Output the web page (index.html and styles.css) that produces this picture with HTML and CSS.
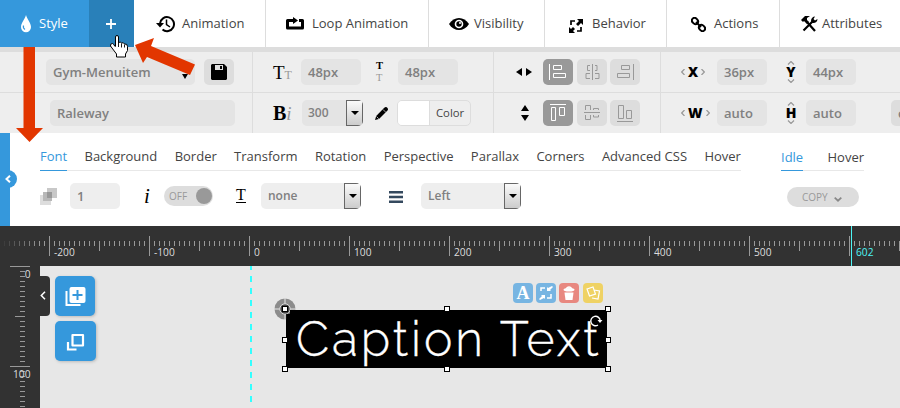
FILE: index.html
```html
<!DOCTYPE html>
<html lang="en">
<head>
<meta charset="utf-8">
<title>Layer style editor</title>
<link rel="stylesheet" href="styles.css">
</head>
<body>
<nav class="tabs">
  <a class="tab tab-style"><svg width="12" height="18" viewBox="0 0 12 18"><path fill="#fff" d="M6 0C5 4 1 8 1 12a5 5.300 0 0 0 10 0C11 8 7 4 6 0z"/><path d="M3.500 10.500c-.5 2 .3 3.300 1.500 4" fill="none" stroke="#3598dc" stroke-width="1.200"/></svg><span>Style</span></a>
  <a class="tab tab-plus"><svg width="10" height="10" viewBox="0 0 10 10"><path d="M5 0v10M0 5h10" stroke="#fff" stroke-width="1.800"/></svg></a>
  <a class="tab tab-animation"><svg width="19" height="18" viewBox="0 0 19 18"><path d="M4 8.500a7 7 0 1 1 2.500 6" fill="none" stroke="#000" stroke-width="2"/><path d="M0 8h8l-4 4.500z"/><path d="M10.500 4.500v5l3.500 2.500" fill="none" stroke="#000" stroke-width="1.500"/></svg><span>Animation</span></a>
  <a class="tab tab-loop"><svg width="18" height="13" viewBox="0 0 18 13"><path d="M7 3.500H1.500v7.500h15V3.500H13" fill="none" stroke="#000" stroke-width="3" stroke-linejoin="round"/><path d="M7 0l5 3.500L7 7z"/></svg><span>Loop Animation</span></a>
  <a class="tab tab-visibility"><svg width="20" height="12" viewBox="0 0 20 12"><path d="M0 6C5-2 15-2 20 6 15 14 5 14 0 6z"/><circle cx="10" cy="6" r="4.300" fill="#fff"/><circle cx="10" cy="6" r="2.700"/><circle cx="11" cy="5" r="1" fill="#fff"/></svg><span>Visibility</span></a>
  <a class="tab tab-behavior"><svg width="14" height="14" viewBox="0 0 14 14"><path d="M8 0h6v6l-2-2-3 3-2-2 3-3zM6 14H0V8l2 2 2-2 2 2-2 2z"/><path d="M2 6V2h4M12 8v4H8" fill="none" stroke="#000" stroke-width="1.700"/></svg><span>Behavior</span></a>
  <a class="tab tab-actions"><svg width="15" height="15" viewBox="0 0 15 15"><g fill="none" stroke="#000" stroke-width="2"><ellipse cx="4" cy="4" rx="3.300" ry="2.700" transform="rotate(45 4 4)"/><ellipse cx="11" cy="11" rx="3.300" ry="2.700" transform="rotate(45 11 11)"/><path d="M5 5l5 5"/></g></svg><span>Actions</span></a>
  <a class="tab tab-attributes"><svg width="17" height="16" viewBox="0 0 17 16"><path d="M0 4l4-4h5L6 2v2l2 2-2 2-3-3-1 1z"/><path d="M6 6l8 9M2.500 14.500L12 5" stroke="#000" stroke-width="2.200"/><path d="M10 5c0-3 2-4.500 4-4.500L12.500 3 14 4.500 16.500 3C16.500 6 14 7.500 11.500 7z"/></svg><span>Attributes</span></a>
</nav>

<section class="settings">
  <div class="row">
    <div class="group g-name"><div class="field preset">Gym-Menuitem<i class="caret"></i></div><button class="tile save"><svg width="16" height="16" viewBox="0 0 16 16"><path d="M1 0h12l3 3v12l-1 1H1l-1-1V1z"/><path d="M4 1h8v5H4z" fill="#ddd"/><path d="M9 2h2v3H9z"/></svg></button></div>
    <div class="group g-type"><span class="icon-tt">T<small>T</small></span><div class="field size">48px</div><span class="icon-lh"><b>T</b><span>T</span></span><div class="field height">48px</div></div>
    <div class="group g-align">
      <svg class="dir" width="16" height="8" viewBox="0 0 16 8"><path d="M0 4l6-4v8zM16 4l-6-4v8z"/></svg>
      <div class="tile on"><svg width="18" height="18" viewBox="0 0 18 18"><path d="M.5 1v16M4.500 2.500h8v4h-8zM4.500 10.500h12v4h-12z"/></svg></div>
      <div class="tile"><svg width="18" height="18" viewBox="0 0 18 18"><path d="M9.500 1v16M7 2.500H4.500v5H7M12 2.500h2v5h-2M7 10.500H3v5h4M12 10.500h4v5h-4"/></svg></div>
      <div class="tile"><svg width="18" height="18" viewBox="0 0 18 18"><path d="M17.500 1v16M5.500 2.500h8v4h-8zM1.500 10.500h12v4h-12z"/></svg></div>
    </div>
    <div class="group g-pos"><span class="axis"><svg width="4" height="6" viewBox="0 0 4 6"><path d="M3.500 0L.7 3l2.800 3"/></svg><b>X</b><svg width="4" height="6" viewBox="0 0 4 6"><path d="M.5 0l2.800 3L.5 6"/></svg></span><div class="field pos">36px</div><span class="axis vertical"><svg width="8" height="4" viewBox="0 0 8 4"><path d="M1 3.500l3-3 3 3"/></svg><b>Y</b><svg width="8" height="4" viewBox="0 0 8 4"><path d="M1 .5l3 3 3-3"/></svg></span><div class="field pos second">44px</div></div>
  </div>
  <div class="row lower">
    <div class="group g-name"><div class="field font">Raleway</div></div>
    <div class="group g-type"><span class="icon-bi"><b>B</b><i>i</i></span><div class="select weight"><span>300</span><i class="drop"></i></div><svg class="pencil" width="13" height="13" viewBox="0 0 13 13"><path d="M0 13l1.200-4L9 1q2-2 3.500 0 1 1.500-.5 3L4 12z"/><path d="M1.500 9.500l2.300 2.300M8 2.500L11 5.500" stroke="#eee" stroke-width=".7"/></svg><div class="color"><i></i><span>Color</span></div></div>
    <div class="group g-align">
      <svg class="dir updown" width="8" height="16" viewBox="0 0 8 16"><path d="M4 0l4 6H0zM4 16l4-6H0z"/></svg>
      <div class="tile on"><svg width="18" height="18" viewBox="0 0 18 18"><path d="M1 .5h16M2.500 3.500h4v13h-4zM10.500 3.500h5v8h-5z"/></svg></div>
      <div class="tile"><svg width="18" height="18" viewBox="0 0 18 18"><path d="M1 8.500h16M2.500 6V1.500h5V6M2.500 11v4.500h5V11M10.500 6V4.500h5V6M10.500 11v2h5v-2"/></svg></div>
      <div class="tile"><svg width="18" height="18" viewBox="0 0 18 18"><path d="M1 17.500h16M2.500 1.500h5v13h-5zM10.500 6.500h5v8h-5z"/></svg></div>
    </div>
    <div class="group g-pos"><span class="axis"><svg width="4" height="6" viewBox="0 0 4 6"><path d="M3.500 0L.7 3l2.800 3"/></svg><b>W</b><svg width="4" height="6" viewBox="0 0 4 6"><path d="M.5 0l2.800 3L.5 6"/></svg></span><div class="field pos">auto</div><span class="axis vertical"><svg width="8" height="4" viewBox="0 0 8 4"><path d="M1 3.500l3-3 3 3"/></svg><b>H</b><svg width="8" height="4" viewBox="0 0 8 4"><path d="M1 .5l3 3 3-3"/></svg></span><div class="field pos second">auto</div><div class="field cover">c</div></div>
  </div>
</section>

<section class="panel">
  <div class="panel-edge"><span class="collapse"><svg width="6" height="8" viewBox="0 0 6 8"><path d="M5 .8L1.500 4 5 7.200" fill="none" stroke="#fff" stroke-width="2"/></svg></span></div>
  <div class="panel-main">
    <div class="subnav">
      <div class="links"><a class="current">Font</a><a>Background</a><a>Border</a><a>Transform</a><a>Rotation</a><a>Perspective</a><a>Parallax</a><a>Corners</a><a>Advanced CSS</a><a>Hover</a></div>
      <div class="links states"><a class="current">Idle</a><a>Hover</a></div>
    </div>
    <div class="controls">
      <svg class="opacity" width="17" height="17" viewBox="0 0 17 17"><path fill="#ddd" d="M0 7h11v10H0z"/><path fill="#c8c8c8" d="M7 0h10v10H7z"/><path fill="#b8b8b8" d="M3 4h9v9H3z"/><path fill="#999" d="M7 4h5v6H7z"/></svg>
      <div class="field opacity-value">1</div>
      <i class="italic">i</i>
      <div class="toggle"><span>OFF</span><i></i></div>
      <span class="underline-icon">T</span>
      <div class="select decoration"><span>none</span><i class="drop"></i></div>
      <svg class="bars" width="14" height="12" viewBox="0 0 14 12"><path d="M0 1.200h14M0 6h14M0 10.800h14" stroke="#34495e" stroke-width="2.400"/></svg>
      <div class="select align"><span>Left</span><i class="drop"></i></div>
      <div class="copy">COPY<svg width="8" height="5" viewBox="0 0 8 5"><path d="M.7.7L4 3.700 7.300.7" fill="none" stroke="#888" stroke-width="1.800"/></svg></div>
    </div>
  </div>
</section>

<section class="workspace">
  <div class="ruler-x">
    <svg width="900" height="40" viewBox="0 0 900 40">
      <defs>
        <pattern id="tx" x="49" width="100" height="40" patternUnits="userSpaceOnUse"><path d="M.5 10v20M50.500 15v10" stroke="#999"/></pattern>
        <pattern id="ts" x="49" width="5" height="40" patternUnits="userSpaceOnUse"><path d="M.5 15v5" stroke="#999"/></pattern>
        <linearGradient id="fade"><stop stop-color="#323232"/><stop offset="1" stop-color="#323232" stop-opacity="0"/></linearGradient>
      </defs>
      <path fill="url(#ts)" d="M0 0h900v40H0z"/><path fill="url(#tx)" d="M40 0h860v40H40z"/><path fill="url(#fade)" d="M0 0h40v40H0z"/>
      <path d="M851.500 0v40" stroke="#4df5f5"/>
      <g class="numbers"><text x="54" y="30">-200</text><text x="154" y="30">-100</text><text x="254" y="30">0</text><text x="354" y="30">100</text><text x="454" y="30">200</text><text x="554" y="30">300</text><text x="654" y="30">400</text><text x="754" y="30">500</text><text class="marker" x="856" y="30">602</text></g>
    </svg>
  </div>
  <div class="stage">
    <div class="ruler-y">
      <svg width="40" height="142" viewBox="0 0 40 142">
        <defs><pattern id="ty" width="40" height="100" patternUnits="userSpaceOnUse"><path d="M10 .5h20M15 50.500h10" stroke="#999"/></pattern><pattern id="tm" width="40" height="5" patternUnits="userSpaceOnUse"><path d="M20 .5h5" stroke="#999"/></pattern></defs>
        <path fill="url(#tm)" d="M0 0h40v142H0z"/><path fill="url(#ty)" d="M0 0h40v142H0z"/>
        <g class="numbers" text-anchor="end"><text x="30.500" y="12">0</text><text x="30.500" y="112">100</text></g>
      </svg>
    </div>
    <div class="drawer"><svg width="6" height="9" viewBox="0 0 6 9"><path d="M5 .7L1.300 4.500 5 8.300" fill="none" stroke="#fff" stroke-width="1.500"/></svg></div>
    <div class="tools">
      <button><svg width="21" height="21" viewBox="0 0 21 21"><path d="M1.500 5v14h14" fill="none" stroke="#fff" stroke-width="2"/><rect x="4.500" y="1" width="16" height="16" rx="2" fill="#fff"/><path d="M12.500 4v10M7.500 9h10" stroke="#3598dc" stroke-width="2"/></svg></button>
      <button class="wide"><svg width="19" height="19" viewBox="0 0 19 19"><path d="M6.500 3H17v10.500H6.500z" fill="none" stroke="#fff" stroke-width="2.200" stroke-linejoin="round"/><path d="M2 10v7.500h8.500" fill="none" stroke="#fff" stroke-width="2.200"/></svg></button>
    </div>
    <div class="canvas">
      <i class="guide"></i>
      <div class="layer"><span>Caption Text</span>
        <i class="anchor"><svg width="22" height="22" viewBox="0 0 22 22"><circle cx="11" cy="11" r="10.500" fill="#8c8c8c"/><path d="M11 0v22M0 11h22" stroke="#e7e7e7"/><circle cx="11" cy="11" r="5.200" fill="#444" stroke="#ddd"/></svg></i>
        <i class="handle nw"></i><i class="handle n"></i><i class="handle ne"></i><i class="handle w"></i><i class="handle e"></i><i class="handle sw"></i><i class="handle s"></i><i class="handle se"></i>
        <svg class="rotate" width="14" height="12" viewBox="0 0 14 12"><circle cx="7" cy="6" r="6" fill="#000"/><path d="M9 10A4.700 4.700 0 1 1 11.200 6" fill="none" stroke="#fff" stroke-width="1.400"/><path d="M8.500 5h5l-2.500 3z" fill="#fff"/></svg>
        <div class="actions">
          <b class="letter">A</b>
          <b><svg width="14" height="14" viewBox="0 0 14 14"><path fill="#fff" d="M13 0l1 1-3 3 1 1H8V1l1 1zM1 14l-1-1 3-3-1-1h4v4l-1-1z"/><path d="M2 5V2h4M12 8v4H8" fill="none" stroke="#fff" stroke-width="1.500"/></svg></b>
          <b class="red"><svg width="12" height="14" viewBox="0 0 12 14"><path d="M3 3q3-4 6 0" fill="none" stroke="#fff" stroke-width="1.500"/><ellipse cx="6" cy="3.700" rx="5.500" ry="1.800" fill="#fff"/><path d="M1.500 6.500h9L9.500 14h-7z" fill="#fff"/></svg></b>
          <b class="yellow"><svg width="15" height="15" viewBox="0 0 15 15"><path d="M8 4l5.500 1-1.500 8-6-1M1 3l6-2 2.500 7-6 2z" fill="none" stroke="#fff" stroke-width="1.200"/></svg></b>
        </div>
      </div>
    </div>
  </div>
</section>

<svg class="pointers" width="220" height="150" viewBox="0 0 220 150">
  <path fill="#e23600" d="M23.500 47h11.500v81h8L29.500 142 16 128h7.500zM135 45l19-7-3 8 44 18.500-5 10.500-43-18-4 6z"/>
  <path d="M115.500 46.500V37q0-1.500 1.500-1.500t1.500 1.500v5.500q2-1 3 .5 2-1 3 1 3-.5 3 2.500v4l-2 3.500v3h-9v-3l-3-4-3-4q-.5-2.500 2-2.500 1 0 2.500 3" fill="#fff" stroke="#000"/><path d="M118.500 42v5M121.500 43.500v4M124.500 44.500v3" stroke="#000" stroke-width=".9"/>
</svg>
</body>
</html>
```
FILE: styles.css
```css
* { box-sizing: border-box; }
body { margin: 0; width: 900px; height: 408px; overflow: hidden; position: relative; background: #fff; font: 13px/1 "Open Sans", sans-serif; color: #444; }
svg { display: block; flex: none; }
button { border: 0; padding: 0; font: inherit; }

.tabs { display: flex; height: 47px; font-size: 13px; }
.tab { display: flex; align-items: center; flex: none; border-right: 1px solid #ddd; white-space: nowrap; }
.tab-style { width: 89px; padding-left: 20px; gap: 7px; background: #3598dc; color: #fff; border: 0; }
.tab-plus { width: 45px; justify-content: center; background: #2980b9; border: 0; }
.tab-plus svg { margin-right: 1px; }
.tab-animation { width: 132px; padding-left: 22px; gap: 7px; }
.tab-loop { width: 163px; padding-left: 20px; gap: 8px; }
.tab-visibility { width: 116px; padding-left: 20px; gap: 5px; }
.tab-behavior { width: 122px; padding-left: 24px; gap: 9px; }
.tab-behavior svg { margin-top: 4px; }
.tab-actions { width: 113px; padding-left: 24px; gap: 8px; }
.tab-actions svg { margin-top: 2px; }
.tab-attributes { width: 120px; padding-left: 21px; gap: 4px; border: 0; }

.settings { height: 86px; border-top: 5px solid #ddd; background: #eee; overflow: hidden; }
.row { display: flex; height: 40px; }
.lower { height: 41px; border-top: 1px solid #ddd; }
.group { display: flex; align-items: center; flex: none; border-right: 1px solid #ddd; }
.g-name { width: 253px; padding-left: 46px; }
.lower .g-name { padding-left: 50px; }
.g-type { width: 241px; padding-left: 20px; }
.g-align { width: 167px; padding-left: 22px; }
.g-pos { width: 239px; padding-left: 20px; border: 0; }

.field, .select { display: flex; align-items: center; flex: none; height: 26px; padding-left: 7px; border-radius: 5px; background: #e4e4e4; color: #808080; font-weight: 600; font-size: 13px; }
.row .field { padding-top: 1px; }
.preset { width: 149px; justify-content: space-between; padding-right: 7px; }
.caret { width: 0; border: 3px solid transparent; border-top: 5px solid #000; border-bottom: 0; margin-top: 8px; }
.font { width: 185px; }
.size { width: 60px; }
.height { width: 60px; }
.tile { display: flex; align-items: center; justify-content: center; flex: none; width: 30px; height: 26px; border-radius: 5px; background: #ddd; }
.save { margin-left: 9px; }
.g-align .tile { margin-right: 3.500px; }
.tile path { stroke: #999; fill: none; }
.save path { stroke: none; fill: #000; }
.save path:nth-child(2) { fill: #ddd; }
.tile.on { background: #999; }
.tile.on path { stroke: #fff; }
.dir { margin-right: 11px; }
.updown { margin: 0 14px 0 5px; }

.icon-tt, .icon-bi { width: 28px; font: 19px/1 "Liberation Serif", serif; color: #000; white-space: nowrap; }
.icon-tt small { font-size: 12px; color: #999; }
.icon-bi { width: 29px; font-size: 20px; }
.icon-bi i { color: #999; font-size: 19px; }
.icon-lh { display: flex; flex-direction: column; width: 37px; padding-left: 15px; font: 10.500px/12px "Liberation Serif", serif; color: #999; }
.icon-lh b { color: #000; }
.select { justify-content: space-between; overflow: hidden; }
.drop { display: flex; align-items: center; justify-content: center; width: 17px; height: 26px; border: 1px solid #666; background: linear-gradient(#fafafa, #ccc); }
.drop::after { content: ""; border: 4px solid transparent; border-top-color: #000; border-bottom: 0; }
.weight { width: 61px; padding-left: 6px; font-size: 12px; }
.pencil { margin: 0 9px 0 12px; }
.color { display: flex; align-items: center; width: 74px; height: 26px; border: 1px solid #ddd; border-radius: 5px; overflow: hidden; font-size: 11.300px; }
.color i { width: 32px; height: 24px; margin-right: 6px; background: #fff; border-right: 1px solid #ddd; }
.axis { display: flex; align-items: center; flex: none; gap: 3px; width: 36px; color: #000; font-size: 14px; }
.axis b { font-weight: 800; }
.axis path { fill: none; stroke: #999; stroke-width: 1.200; }
.vertical { flex-direction: column; gap: 0; width: 10px; margin: 0 10px 0 19px; }
.pos { width: 50px; }
.cover { width: 40px; margin-left: 35px; background: #ddd; }

.panel { display: flex; height: 93px; background: #fff; }
.panel-edge { width: 10px; background: #3598dc; position: relative; }
.collapse { position: absolute; left: 0; top: 37px; width: 17px; height: 18px; padding: 5px 0 0 5px; border-radius: 0 9px 9px 0; background: #3598dc; }
.panel-main { padding-left: 30px; }
.subnav { display: flex; gap: 40px; height: 38px; }
.links { display: flex; justify-content: space-between; width: 701px; height: 38px; border-bottom: 1px solid #e8e8e8; font-size: 13px; white-space: nowrap; }
.links a { height: 38px; padding-top: 17px; color: #444; }
.links .current { color: #3598dc; border-bottom: 1px solid #3598dc; }
.states { width: 83px; }
.states a { padding-top: 18px; }
.controls { display: flex; align-items: center; height: 50px; }
.controls .field, .controls .select { background: #eee; }
.opacity { margin: 0 13px 0 0; }
.opacity-value { width: 50px; padding-top: 1px; }
.italic { width: 20px; margin-left: 24px; font: italic 400 21px/1 "Liberation Serif", serif; color: #000; }
.toggle { display: flex; align-items: center; justify-content: space-between; width: 49px; height: 20px; padding: 0 1px 0 5px; border-radius: 10px; background: #ddd; color: #999; font-size: 10px; }
.toggle i { width: 16px; height: 16px; border-radius: 8px; background: #999; }
.underline-icon { width: 10px; height: 14px; margin: -1px 15px 0 23px; border-bottom: 1px solid #000; color: #000; font: 16px/11px "Liberation Serif", serif; }
.decoration, .align { width: 100px; font-size: 12px; }
.bars { margin: 1px 18px 0 28px; }
.copy { display: flex; align-items: center; justify-content: space-between; width: 72px; height: 20px; margin: 2px 0 0 266px; padding: 0 17px 0 15px; border-radius: 10px; background: #ddd; color: #999; font-size: 10px; }
.copy svg { margin-top: 4px; }

.ruler-x { height: 40px; background: #323232; }
.numbers { fill: #ddd; font: 10.200px "Open Sans", sans-serif; }
.numbers .marker { fill: #4df5f5; }
.stage { display: flex; height: 142px; background: #e7e7e7; }
.ruler-y { width: 40px; background: #323232; }
.drawer { width: 10px; height: 40px; margin-top: 10px; padding-top: 15px; border-radius: 0 4px 4px 0; background: #323232; }
.tools { display: flex; flex-direction: column; gap: 5px; width: 41px; margin: 10px 0 0 5px; }
.tools button { display: flex; align-items: center; justify-content: center; width: 40px; height: 40px; border-radius: 5px; background: #3598dc; box-shadow: 1px 1px 3px #bbb; }
.tools .wide { width: 41px; }
.canvas { flex: 1; position: relative; }
.guide { position: absolute; left: 154px; top: 0; width: 2px; height: 136px; background: repeating-linear-gradient(#3ff 0 4px, transparent 4px 10px, #3ff 10px 12px); }
.layer { position: absolute; left: 190px; top: 44px; width: 321px; height: 58px; padding-left: 10px; background: #000; color: #fff; font: 300 48px/58px Raleway, Lato, sans-serif; letter-spacing: 2.950px; white-space: nowrap; -webkit-text-stroke: .3px #fff; }
.handle { position: absolute; width: 6px; height: 6px; border: 1px solid #000; background: #fff; }
.nw, .w, .sw { left: -4px; } .n, .s { left: 158px; } .ne, .e, .se { left: 319px; }
.nw, .n, .ne { top: -4px; } .w, .e { top: 27px; } .sw, .s, .se { top: 56px; }
.anchor { position: absolute; left: -12px; top: -12px; clip-path: polygon(0 0, 100% 0, 100% 55%, 72% 55%, 72% 72%, 55% 72%, 55% 100%, 0 100%); }
.rotate { position: absolute; left: 303px; top: 5px; }
.actions { position: absolute; left: 227px; top: -27px; display: flex; gap: 3px; letter-spacing: 0; -webkit-text-stroke: 0; }
.actions b { display: flex; align-items: center; justify-content: center; width: 20px; height: 20px; border-radius: 4px; background: #77b5e2; }
.actions .letter { font: 700 18px/20px "Liberation Serif", serif; }
.actions .red { background: #e88880; }
.actions .yellow { margin-left: 1px; background: #efd264; }
.pointers { position: absolute; left: 0; top: 0; }
```
